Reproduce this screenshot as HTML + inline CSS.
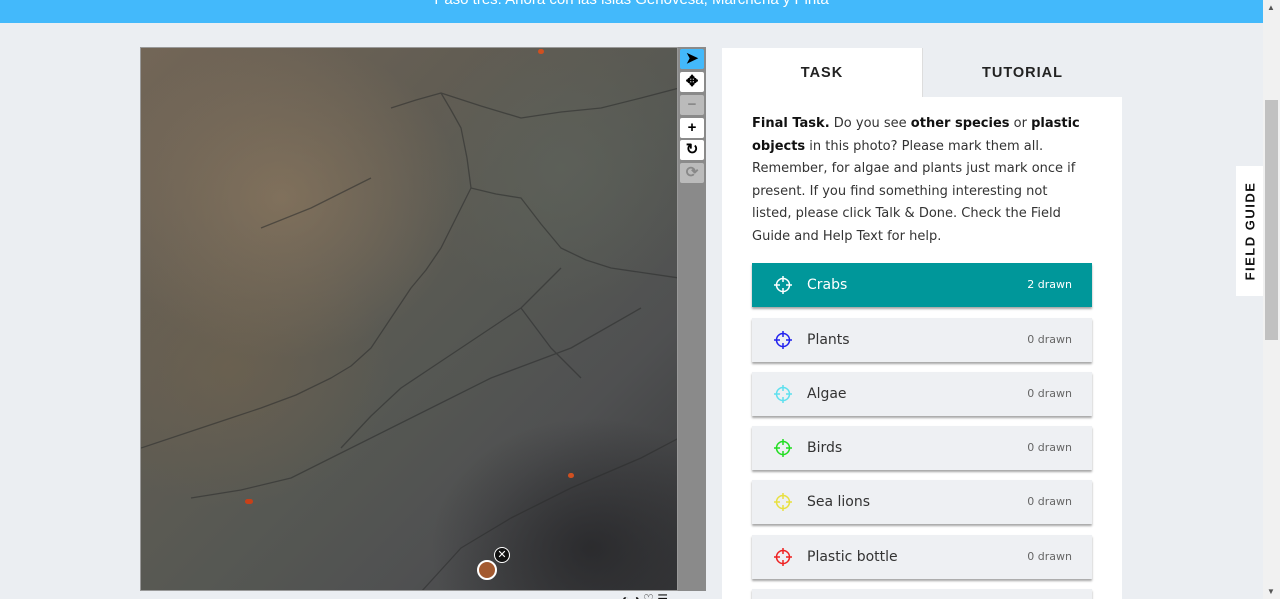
<!DOCTYPE html>
<html style="overflow:hidden;height:599px"><head><meta charset="utf-8"><style>
*{box-sizing:border-box;margin:0;padding:0}
html,body{overflow:hidden}
body{width:1280px;height:599px;background:#ebeef2;font-family:"Liberation Sans",sans-serif;position:relative}
.top{position:absolute;left:0;top:0;width:1263px;height:23px;background:#43b9fb;color:#fff;text-align:center;font-size:15px;line-height:0px;overflow:hidden}
.img{position:absolute;left:140px;top:47px;width:538px;height:544px;border:1px solid #999;overflow:hidden;
background:
radial-gradient(ellipse 180px 160px at 140px 150px,rgba(140,120,95,.7),transparent),
radial-gradient(ellipse 160px 140px at 90px 320px,rgba(115,100,78,.55),transparent),
radial-gradient(ellipse 160px 130px at 450px 500px,rgba(35,35,38,.75),transparent),
radial-gradient(ellipse 140px 140px at 420px 120px,rgba(95,100,92,.6),transparent),
linear-gradient(135deg,#736657 0%,#625d53 30%,#565853 55%,#4f5051 75%,#38393b 100%)}
.tb{position:absolute;left:678px;top:47px;width:28px;height:544px;background:#8a8a8a}
.tb div{position:absolute;left:2px;width:24px;height:20px;background:#fff;border-radius:2px;font-size:15px;font-weight:bold;text-align:center;line-height:20px;color:#000}
.panel{position:absolute;left:722px;top:48px;width:400px;height:551px;background:#fff;overflow:hidden}
.tab{position:absolute;top:0;width:200px;height:49px;font-weight:bold;font-size:14.5px;letter-spacing:1px;text-align:center;line-height:50px;color:#222}
.txt{position:absolute;left:30px;top:65px;width:333px;line-height:22.6px;color:#333;font-family:"DejaVu Sans",sans-serif;font-size:13px}
.txt b{color:#111}
.btn{position:absolute;left:30px;width:340px;height:44px;background:#eef0f3;box-shadow:0 2px 2px rgba(0,0,0,.35);font-family:"DejaVu Sans",sans-serif}
.btn .l{position:absolute;left:55px;top:0;line-height:44px;font-size:14px;color:#333}
.btn .r{position:absolute;right:20px;top:0;line-height:44px;font-size:11px;color:#666}
.btn svg{position:absolute;left:21px;top:12px}
.btn.on{background:#00979a}.btn.on .l,.btn.on .r{color:#fff}
.fg{position:absolute;left:1236px;top:166px;width:27px;height:130px;background:#fff;}
.fg span{position:absolute;left:14px;top:65px;transform:translate(-50%,-50%) rotate(-90deg);white-space:nowrap;font-weight:bold;font-size:13px;letter-spacing:1.5px;color:#111}
.sb{position:absolute;left:1263px;top:0;width:17px;height:599px;background:#f1f1f1}
.th{position:absolute;left:1265px;top:100px;width:13px;height:240px;background:#c1c1c1}
</style></head><body>
<div class="top">Paso tres: Ahora con las islas Genovesa, Marchena y Pinta</div>
<div class="img">
<svg width="538" height="544" style="position:absolute;left:0;top:0" fill="none" stroke="#2b2c2c" stroke-width="1.3" opacity=".55" stroke-linejoin="round">
<path d="M250 60 L275 52 L300 45 L310 62 L320 80 L326 110 L330 140 L315 170 L300 200 L285 222 L270 240 L250 270 L230 300 L210 318 L190 330 L155 347 L120 360 L90 370 L60 380 L0 400"/>
<path d="M300 45 L340 58 L380 70 L420 64 L460 60 L500 50 L538 40"/>
<path d="M330 140 L355 146 L380 150 L400 176 L420 200 L445 212 L470 220 L538 230"/>
<path d="M200 400 L230 368 L260 340 L290 320 L320 300 L350 280 L380 260 L420 220"/>
<path d="M50 450 L100 442 L150 430 L200 405 L250 380 L300 355 L350 330 L390 315 L430 300 L500 260"/>
<path d="M280 544 L300 522 L320 500 L345 485 L370 470 L400 455 L430 440 L500 410 L538 390"/>
<path d="M380 260 L395 280 L410 300 L440 330"/>
<path d="M120 180 L170 160 L230 130"/>
</svg>
<div style="position:absolute;left:336px;top:512px;width:20px;height:20px;border:2px solid #fff;border-radius:50%;background:#a35a30"></div>
<div style="position:absolute;left:353px;top:499px;width:16px;height:16px;border-radius:50%;background:#111;border:1px solid #fff;color:#fff;font-size:11px;line-height:14px;text-align:center">✕</div>
<div style="position:absolute;left:104px;top:451px;width:8px;height:5px;background:#c84018;border-radius:3px"></div>
<div style="position:absolute;left:427px;top:425px;width:6px;height:5px;background:#d05020;border-radius:3px"></div>
<div style="position:absolute;left:397px;top:1px;width:6px;height:5px;background:#d05020;border-radius:3px"></div>
</div>
<div class="tb">
<div style="top:2px;background:#43b9fb">➤</div>
<div style="top:25px">✥</div>
<div style="top:48px;background:#bbb;color:#888">−</div>
<div style="top:71px">+</div>
<div style="top:93px">↻</div>
<div style="top:116px;background:#bbb;color:#888">⟳</div>
</div>
<div style="position:absolute;left:622px;top:592px;height:7px;overflow:hidden;font-size:12px;line-height:14px;color:#111">◐ ◑ ♡ ☰</div>
<div class="panel">
<div class="tab" style="left:0;background:#fff">TASK</div>
<div class="tab" style="left:200px;background:#ebeef2;border-left:1px solid #ddd">TUTORIAL</div>
<div class="txt"><b>Final Task.</b> Do you see <b>other species</b> or <b>plastic objects</b> in this photo? Please mark them all. Remember, for algae and plants just mark once if present. If you find something interesting not listed, please click Talk &amp; Done. Check the Field Guide and Help Text for help.</div>
<div class="btn on" style="top:215px"><svg width="20" height="20" viewBox="0 0 20 20" fill="none" stroke="#fff" stroke-width="1.5"><circle cx="10" cy="10" r="6.5"/><path d="M10 1v6M10 13v6M1 10h6M13 10h6"/></svg><span class="l">Crabs</span><span class="r">2 drawn</span></div>
<div class="btn" style="top:270px"><svg width="20" height="20" viewBox="0 0 20 20" fill="none" stroke="#2222ee" stroke-width="1.5"><circle cx="10" cy="10" r="6.5"/><path d="M10 1v6M10 13v6M1 10h6M13 10h6"/></svg><span class="l">Plants</span><span class="r">0 drawn</span></div>
<div class="btn" style="top:324px"><svg width="20" height="20" viewBox="0 0 20 20" fill="none" stroke="#5ee0ee" stroke-width="1.5"><circle cx="10" cy="10" r="6.5"/><path d="M10 1v6M10 13v6M1 10h6M13 10h6"/></svg><span class="l">Algae</span><span class="r">0 drawn</span></div>
<div class="btn" style="top:378px"><svg width="20" height="20" viewBox="0 0 20 20" fill="none" stroke="#22dd22" stroke-width="1.5"><circle cx="10" cy="10" r="6.5"/><path d="M10 1v6M10 13v6M1 10h6M13 10h6"/></svg><span class="l">Birds</span><span class="r">0 drawn</span></div>
<div class="btn" style="top:432px"><svg width="20" height="20" viewBox="0 0 20 20" fill="none" stroke="#e8e040" stroke-width="1.5"><circle cx="10" cy="10" r="6.5"/><path d="M10 1v6M10 13v6M1 10h6M13 10h6"/></svg><span class="l">Sea lions</span><span class="r">0 drawn</span></div>
<div class="btn" style="top:487px"><svg width="20" height="20" viewBox="0 0 20 20" fill="none" stroke="#ee2222" stroke-width="1.5"><circle cx="10" cy="10" r="6.5"/><path d="M10 1v6M10 13v6M1 10h6M13 10h6"/></svg><span class="l">Plastic bottle</span><span class="r">0 drawn</span></div>
<div class="btn" style="top:541px;height:10px"></div>
</div>
<div class="fg"><span>FIELD GUIDE</span></div>
<div class="sb"></div><div class="th"></div>
<div style="position:absolute;left:1267px;top:3px;font-size:8px;color:#555">▲</div>
<div style="position:absolute;left:1267px;top:587px;font-size:8px;line-height:10px;color:#555">▼</div>
</body></html>
